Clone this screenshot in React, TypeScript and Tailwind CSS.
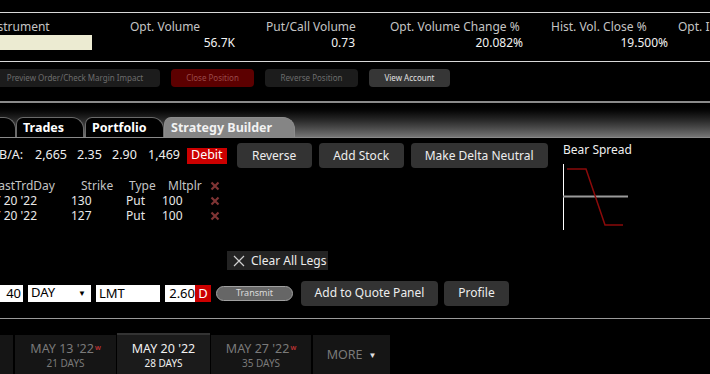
import React from "react";

const font = { fontFamily: '"Noto Sans", "Open Sans", sans-serif' };

const HeaderCol = ({ label, value, className }: { label: string; value?: string; className: string }) => (
  <div className={`flex flex-col shrink-0 ${className}`}>
    <span className="text-[12px] leading-[16px] text-[#c4c4c4] whitespace-nowrap">{label}</span>
    <span className="text-[12px] leading-[16px] text-[#f2f2f2] text-right whitespace-nowrap">{value}</span>
  </div>
);

const SmallBtn = ({ children, className }: { children: React.ReactNode; className: string }) => (
  <div className={`h-[18px] shrink-0 rounded-[4px] flex items-center justify-center text-[8px] whitespace-nowrap ${className}`}>
    {children}
  </div>
);

const Btn = ({ children, className = "" }: { children: React.ReactNode; className?: string }) => (
  <div
    className={`h-[25px] shrink-0 rounded-[4px] bg-[#333333] text-[#ededed] text-[12px] flex items-center justify-center whitespace-nowrap ${className}`}
  >
    {children}
  </div>
);

const XMark = () => (
  <svg width="10" height="10" viewBox="0 0 10 10">
    <path d="M1.5 1.5 L8.5 8.5 M8.5 1.5 L1.5 8.5" stroke="#7e3434" strokeWidth="2.2" />
  </svg>
);

const Tab = ({ label, active, className }: { label: string; active?: boolean; className: string }) => (
  <div
    className={`h-[21px] shrink-0 rounded-tl-[7px] rounded-tr-[12px] border border-b-0 flex items-center text-[12.5px] font-bold whitespace-nowrap ${
      active ? "bg-[#858585] border-[#8c8c8c] text-[#f2f2f2]" : "bg-black border-[#6a6a6a] text-white"
    } ${className}`}
  >
    {label}
  </div>
);

const LegRow = ({ a, b, c, d, head }: { a: string; b: string; c: string; d: string; head?: boolean }) => (
  <div className={`flex items-center h-[15px] leading-[15px] text-[12px] ${head ? "text-[#c4c4c4]" : "text-[#e8e8e8]"}`}>
    <span className={`shrink-0 whitespace-nowrap ${head ? "-ml-[8px] w-[89px]" : "-ml-[24px] w-[95px]"}`}>{a}</span>
    <span className={`shrink-0 ${head ? "w-[48px]" : "w-[55px]"}`}>{b}</span>
    <span className={`shrink-0 ${head ? "w-[39px]" : "w-[36px]"}`}>{c}</span>
    <span className={`shrink-0 ${head ? "w-[42px]" : "w-[48px]"}`}>{d}</span>
    <XMark />
  </div>
);

const DateTile = ({ date, days, active, w, className = "" }: { date: string; days: string; active?: boolean; w?: boolean; className?: string }) => (
  <div
    className={`h-[40px] shrink-0 flex flex-col items-center justify-center ${
      active ? "bg-[#1b1b1b] border-t-2 border-[#333] text-[#f0f0f0]" : "bg-[#151515] text-[#7a7a7a]"
    } ${className}`}
  >
    <span className="text-[12.5px] leading-[16px] whitespace-nowrap">
      {date}
      {w && <sup className="text-[#b33] text-[6px] ml-[1px] font-bold">W</sup>}
    </span>
    <span className="text-[10px] leading-[13px] whitespace-nowrap">{days}</span>
  </div>
);

export default function App() {
  return (
    <div className="w-[710px] h-[374px] bg-black overflow-hidden flex flex-col" style={font}>
      <div className="h-[12px] shrink-0" />
      <div className="h-[1px] shrink-0 bg-[#d8d8d8]" />
      {/* quote header */}
      <div className="h-[48px] shrink-0 flex items-start pt-[6px]">
        <div className="flex flex-col shrink-0 w-[134px] -ml-[14px]">
          <span className="text-[12px] leading-[16px] text-[#c4c4c4]">Instrument</span>
          <div className="w-[106px] h-[15px] bg-[#ecebd2]" />
        </div>
        <HeaderCol label="Opt. Volume" value="56.7K" className="w-[105px] ml-[10px]" />
        <HeaderCol label="Put/Call Volume" value="0.73" className="w-[89px] ml-[31px]" />
        <HeaderCol label="Opt. Volume Change %" value="20.082%" className="w-[133px] ml-[35px]" />
        <HeaderCol label="Hist. Vol. Close %" value="19.500%" className="w-[117px] ml-[28px]" />
        <HeaderCol label="Opt. Implied Vol. %" className="w-[120px] ml-[10px]" />
      </div>
      <div className="h-[1px] shrink-0 bg-[#d8d8d8]" />
      {/* action buttons */}
      <div className="h-[39px] shrink-0 flex items-start pt-[7px] gap-[11px]">
        <SmallBtn className="w-[170px] -ml-[10px] bg-[#1c1c1c] text-[#6c6c6c]">Preview Order/Check Margin Impact</SmallBtn>
        <SmallBtn className="w-[83px] bg-[#5c0000] text-[#9a4a4a]">Close Position</SmallBtn>
        <SmallBtn className="w-[93px] bg-[#1c1c1c] text-[#6c6c6c]">Reverse Position</SmallBtn>
        <SmallBtn className="w-[81px] bg-[#363636] text-[#e0e0e0]">View Account</SmallBtn>
      </div>
      <div className="h-[2px] shrink-0 bg-[#8a8a8a]" />
      {/* tab bar */}
      <div className="h-[35px] shrink-0 bg-gradient-to-b from-black via-[#2a2a2a] to-[#7a7a7a] flex items-end relative">
        <div className="flex items-end">
          <Tab label="" className="w-[30px] -ml-[14px]" />
          <Tab label="Trades" className="w-[68px] pl-[6px]" />
          <Tab label="Portfolio" className="w-[79px] ml-[1px] pl-[6px]" />
          <Tab label="Strategy Builder" active className="w-[131px] pl-[6px]" />
        </div>
        <div className="absolute left-0 right-0 bottom-0 h-[1px] bg-[#8a8a8a]" />
      </div>
      {/* strategy builder */}
      <div className="h-[180px] shrink-0 flex">
        <div className="w-[560px] shrink-0 flex flex-col">
          <div className="flex items-start pt-[5px]">
            <div className="flex items-center h-[25px] text-[12.5px] text-[#efefef] whitespace-nowrap">
              <span className="-ml-[1px] w-[36px]">B/A:</span>
              <span className="w-[42px]">2,665</span>
              <span className="w-[35px]">2.35</span>
              <span className="w-[36px]">2.90</span>
              <span className="w-[39px]">1,469</span>
              <span className="bg-[#cc0000] text-white h-[16px] px-[4px] flex items-center">Debit</span>
            </div>
            <Btn className="w-[75px] ml-[10px]">Reverse</Btn>
            <Btn className="w-[85px] ml-[7px]">Add Stock</Btn>
            <Btn className="w-[137px] ml-[7px]">Make Delta Neutral</Btn>
          </div>
          <div className="mt-[10px] flex flex-col">
            <LegRow head a="LastTrdDay" b="Strike" c="Type" d="Mltplr" />
            <LegRow a="MAY 20 '22" b="130" c="Put" d="100" />
            <LegRow a="MAY 20 '22" b="127" c="Put" d="100" />
          </div>
          <div className="mt-[28px] ml-[227px] w-[101px] h-[19px] bg-[#232323] flex items-center gap-[6px] pl-[6px] text-[12px] text-[#ececec]">
            <svg width="12" height="12" viewBox="0 0 12 12">
              <path d="M1 1 L11 11 M11 1 L1 11" stroke="#d0d0d0" strokeWidth="1.2" />
            </svg>
            <span className="whitespace-nowrap">Clear All Legs</span>
          </div>
          <div className="mt-[11px] flex items-center h-[24px] text-[13px] text-black">
            <div className="w-[30px] -ml-[7px] h-[17px] bg-white text-right pr-[2px] leading-[17px]">40</div>
            <div className="w-[63px] ml-[5px] h-[17px] bg-white flex items-center justify-between pl-[3px] pr-[5px]">
              <span>DAY</span>
              <span className="text-[8px]">▼</span>
            </div>
            <div className="w-[64px] ml-[5px] h-[17px] bg-white pl-[3px] leading-[17px]">LMT</div>
            <div className="w-[30px] ml-[5px] h-[17px] bg-white text-right leading-[17px]">2.60</div>
            <div className="w-[16px] h-[17px] bg-[#cc0000] text-white text-center leading-[17px]">D</div>
            <div className="w-[77px] ml-[5px] h-[15px] rounded-full bg-[#666] border border-[#a0a0a0] text-[#dcdcdc] text-[9px] flex items-center justify-center">
              Transmit
            </div>
            <Btn className="w-[137px] ml-[8px]">Add to Quote Panel</Btn>
            <Btn className="w-[65px] ml-[6px]">Profile</Btn>
          </div>
        </div>
        <div className="flex flex-col pt-[4px] ml-[3px]">
          <span className="text-[12px] text-[#efefef] leading-[16px] whitespace-nowrap">Bear Spread</span>
          <svg width="70" height="70" viewBox="0 0 70 70" className="-ml-[1px] mt-[5px]">
            <line x1="1.5" y1="1" x2="1.5" y2="67" stroke="#ffffff" strokeWidth="1" />
            <line x1="1" y1="33.5" x2="66" y2="33.5" stroke="#9a9a9a" strokeWidth="2" />
            <polyline points="5,6 24,6 43,62 61,62" fill="none" stroke="#8b0a0a" strokeWidth="1.5" />
          </svg>
        </div>
      </div>
      <div className="h-[1px] shrink-0 bg-[#9a9a9a]" />
      {/* expiry tiles */}
      <div className="flex items-end mt-[14px] gap-[2px]">
        <div className="w-[13px] h-[40px] shrink-0 bg-[#151515]" />
        <DateTile date="MAY 13 '22" days="21 DAYS" w className="w-[101px]" />
        <DateTile date="MAY 20 '22" days="28 DAYS" active className="w-[93px] h-[42px] -mx-[1px]" />
        <DateTile date="MAY 27 '22" days="35 DAYS" w className="w-[100px]" />
        <div className="w-[77px] h-[40px] shrink-0 bg-[#151515] text-[#7a7a7a] text-[12.5px] flex items-center justify-center gap-[6px]">
          MORE <span className="text-[#e0e0e0] text-[8px]">▼</span>
        </div>
      </div>
    </div>
  );
}
